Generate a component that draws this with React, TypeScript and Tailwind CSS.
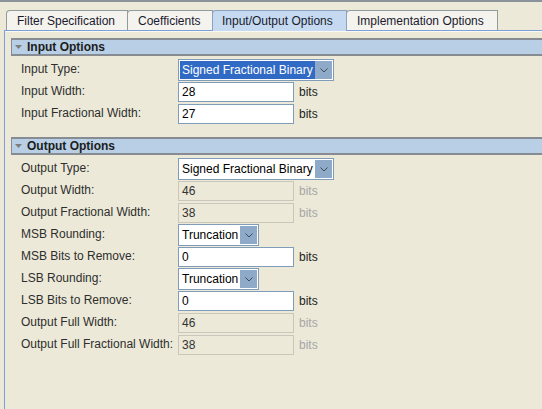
import React from "react";

const tabs = [
  { title: "Filter Specification", w: "w-[122px]" },
  { title: "Coefficients", w: "w-[86px]" },
  { title: "Input/Output Options", w: "w-[135px]", active: true },
  { title: "Implementation Options", w: "w-[152px]" },
];

function Chevron() {
  return (
    <svg width="8" height="5" viewBox="0 0 8 5">
      <polyline points="0.5,0.5 4,4 7.5,0.5" fill="none" stroke="#3d4b5c" strokeWidth="1" />
    </svg>
  );
}

function Select({ value, w, focused }: { value: string; w: string; focused?: boolean }) {
  return (
    <div className={`${w} h-[22px] border border-[#7f9db9] bg-white flex p-px`}>
      <div
        className={`flex-1 flex items-center pl-[2px] text-[12px] whitespace-nowrap overflow-hidden ${
          focused ? "bg-[#316ac5] text-white" : "text-black"
        }`}
      >
        {value}
      </div>
      <div className="w-[17px] bg-[#8eaac8] flex items-center justify-center">
        <Chevron />
      </div>
    </div>
  );
}

function Field({ value, disabled }: { value: string; disabled?: boolean }) {
  return (
    <div className="flex items-center">
      <div
        className={`w-[116px] h-[20px] border flex items-center pl-[3px] text-[12px] ${
          disabled ? "border-[#c9c7ba] bg-[#ece9d8] text-[#333]" : "border-[#7f9db9] bg-white text-black"
        }`}
      >
        {value}
      </div>
      <span className={`ml-[5px] text-[12px] ${disabled ? "text-[#a6a6a6]" : "text-[#222]"}`}>bits</span>
    </div>
  );
}

function Row({ label, children }: { label: string; children: React.ReactNode }) {
  return (
    <div className="flex items-center h-[22px]">
      <div className="w-[173px] pl-[16px] shrink-0 text-[12px] text-[#2e2e2e] -mt-[3px] whitespace-nowrap">{label}</div>
      {children}
    </div>
  );
}

function Header({ title }: { title: string }) {
  return (
    <div className="ml-[6px] h-[18px] border-y-2 border-l border-[#878c92] bg-[#b8cfe5] flex items-center">
      <svg width="7" height="4" viewBox="0 0 7 4" className="ml-[3px] mr-[5px]">
        <polygon points="0,0 7,0 3.5,4" fill="#7d7d7d" />
      </svg>
      <span className="text-[12px] font-bold text-[#1c1c1c]">{title}</span>
    </div>
  );
}

export default function App() {
  return (
    <div className="w-[542px] h-[409px] bg-[#ece9d8] overflow-hidden flex flex-col font-['Liberation_Sans',Arial,sans-serif]">
      <div className="h-[2px] bg-[#8a929b] shrink-0" />
      {/* tabs */}
      <div className="flex pl-[6px] h-[28px] shrink-0 items-end">
        {tabs.map((t) =>
          t.active ? (
            <div
              key={t.title}
              className={`${t.w} -ml-px h-[21px] mb-[-1px] relative z-10 bg-[#c5daf0] border border-b-0 border-[#8da2bf] rounded-tl-[4px] pl-[9px] flex items-center text-[12px] text-[#1a1a2e] whitespace-nowrap`}
            >
              {t.title}
            </div>
          ) : (
            <div
              key={t.title}
              className={`${t.w} -ml-px first:ml-0 h-[20px] bg-[#f4f3ee] border border-b-0 border-[#919b9c] rounded-tl-[4px] pl-[10px] flex items-center text-[12px] text-[#1a1a2e] whitespace-nowrap`}
            >
              {t.title}
            </div>
          )
        )}
      </div>
      {/* panel */}
      <div className="ml-[4px] flex-1 border-l border-t border-[#7d9fd6] flex flex-col">
        <div className="h-px bg-white/70" />
        <div className="mt-[6px]">
          <Header title="Input Options" />
        </div>
        <div className="mt-[3px] flex flex-col">
          <Row label="Input Type:">
            <Select value="Signed Fractional Binary" w="w-[156px]" focused />
          </Row>
          <Row label="Input Width:">
            <Field value="28" />
          </Row>
          <Row label="Input Fractional Width:">
            <Field value="27" />
          </Row>
        </div>
        <div className="mt-[12px]">
          <Header title="Output Options" />
        </div>
        <div className="mt-[3px] flex flex-col">
          <Row label="Output Type:">
            <Select value="Signed Fractional Binary" w="w-[156px]" />
          </Row>
          <Row label="Output Width:">
            <Field value="46" disabled />
          </Row>
          <Row label="Output Fractional Width:">
            <Field value="38" disabled />
          </Row>
          <Row label="MSB Rounding:">
            <Select value="Truncation" w="w-[81px]" />
          </Row>
          <Row label="MSB Bits to Remove:">
            <Field value="0" />
          </Row>
          <Row label="LSB Rounding:">
            <Select value="Truncation" w="w-[81px]" />
          </Row>
          <Row label="LSB Bits to Remove:">
            <Field value="0" />
          </Row>
          <Row label="Output Full Width:">
            <Field value="46" disabled />
          </Row>
          <Row label="Output Full Fractional Width:">
            <Field value="38" disabled />
          </Row>
        </div>
      </div>
    </div>
  );
}
